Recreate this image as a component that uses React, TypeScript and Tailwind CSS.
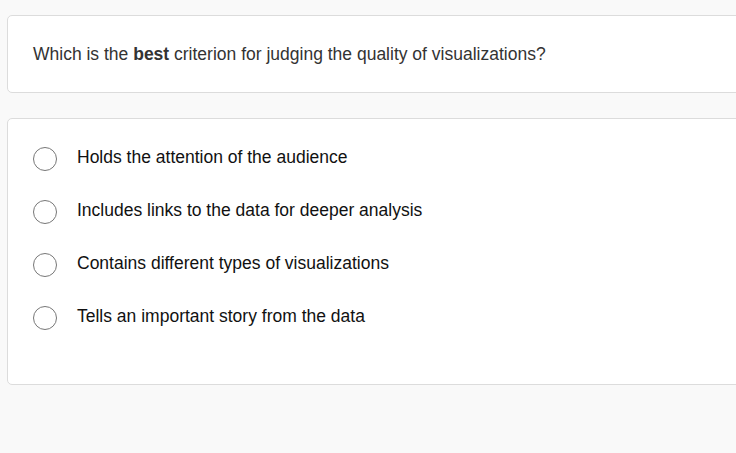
import React from "react";

const options = [
  "Holds the attention of the audience",
  "Includes links to the data for deeper analysis",
  "Contains different types of visualizations",
  "Tells an important story from the data",
];

export default function App() {
  return (
    <div
      className="w-[736px] h-[453px] overflow-hidden bg-[#f9f9f9] pl-[7px] pt-[15px]"
      style={{ fontFamily: '"Liberation Sans", Arial, sans-serif' }}
    >
      <div className="w-[760px] h-[78px] bg-white border border-[#dcdcdc] rounded-[5px] flex items-center pl-[25px]">
        <p className="text-[17.5px] text-[#333]">
          Which is the <b className="font-bold">best</b> criterion for judging the quality of visualizations?
        </p>
      </div>
      <div className="mt-[25px] w-[760px] h-[267px] bg-white border border-[#dcdcdc] rounded-[5px] pt-[13px] pl-[25px]">
        {options.map((o) => (
          <div key={o} className="h-[53px] flex items-center">
            <span className="w-[24px] h-[24px] rounded-full border-[1.5px] border-[#777] bg-white shrink-0" />
            <span className="ml-[20px] pb-[3px] text-[17.5px] text-[#111]">{o}</span>
          </div>
        ))}
      </div>
    </div>
  );
}
